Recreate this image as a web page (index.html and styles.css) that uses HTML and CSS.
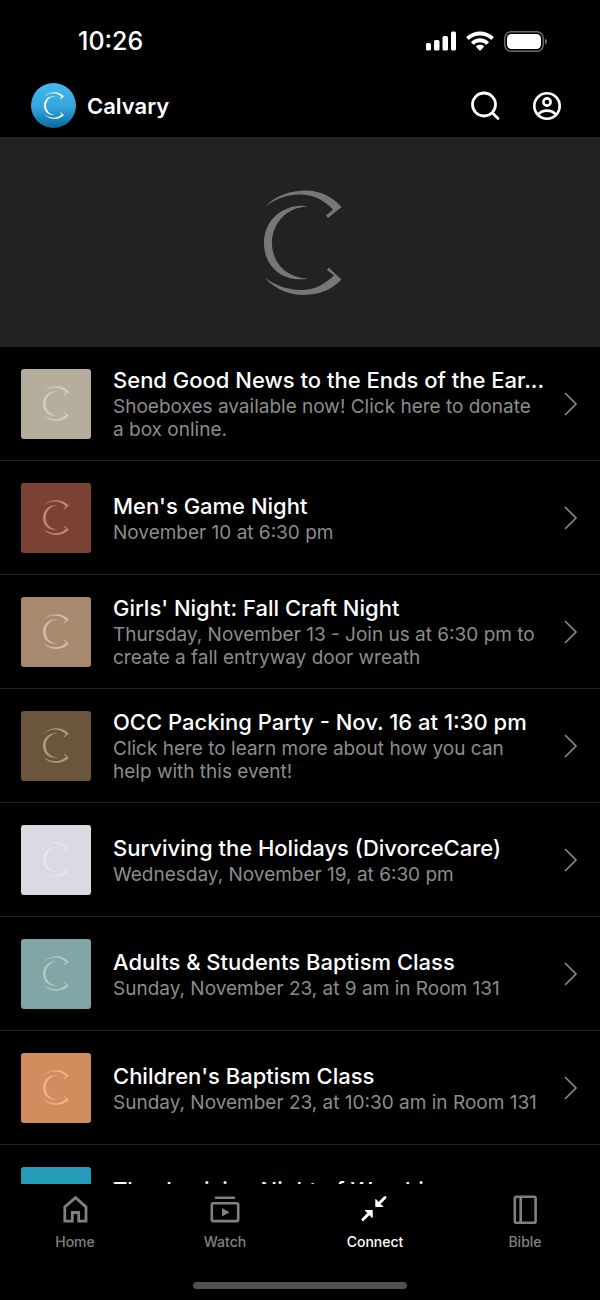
FILE: index.html
```html
<!DOCTYPE html>
<html lang="en">
<head>
    <meta charset="UTF-8">
    <meta name="viewport" content="width=device-width, initial-scale=1.0">
    <title>Calvary</title>
    <link rel="stylesheet" href="styles.css">
</head>
<body>
    <!-- Shared shapes -->
    <svg class="sprite" aria-hidden="true">
        <symbol id="logo" viewBox="24 18 78 105">
            <path d="M25 35C36 23 51 18.500 66 18.500C80 18.500 93 25 101.500 35L88 46L86 43.500L93 37.500C85 29 75 23 61 22.500C47 22 35 27 25 35Z"/>
            <path d="M68 34.500C64 33.500 61 33.500 58 34C38 36 24 51 24 71C24 92 39 107 59 107.300C62 107.400 65 107.200 68 106.500C47 106 32 91 32 71C32 51 47 35 68 34.500Z"/>
            <path d="M25 106C35 117 49 123 64 123C80 122.500 93 117 101.500 107.500L88.500 95.500L87 98L94 103.500C85 112 75 118 61 118C47 118 35 113 25 106Z"/>
        </symbol>
        <symbol id="chevron" viewBox="0 0 14 24">
            <path d="M1 1L12 12L1 23" fill="none" stroke="currentColor" stroke-width="1.600"/>
        </symbol>
    </svg>

    <div class="app">
        <div class="status-bar">
            <span class="time">10:26</span>
            <div class="status-icons">
                <svg width="30" height="20" viewBox="0 0 30 20" fill="#fff">
                    <rect x="0" y="12" width="5" height="7.500" rx="1.500"/>
                    <rect x="8" y="9" width="5.500" height="10.500" rx="1.500"/>
                    <rect x="16.500" y="5" width="5.500" height="14.500" rx="1.500"/>
                    <rect x="25" y="0.500" width="5" height="19" rx="1.500"/>
                </svg>
                <svg width="28" height="20" viewBox="0 0 28 20" fill="#fff">
                    <path d="M14 0.500C8.700 0.500 4 2.500 0.600 5.800Q0.200 6.300 0.600 6.800L2.300 8.500Q2.800 8.900 3.300 8.500C6.200 5.900 9.900 4.500 14 4.500C18.100 4.500 21.800 5.900 24.700 8.500Q25.200 8.900 25.700 8.500L27.400 6.800Q27.800 6.300 27.400 5.800C24 2.500 19.300 0.500 14 0.500Z"/>
                    <path d="M14 7.300C10.600 7.300 7.600 8.600 5.400 10.700Q5 11.200 5.400 11.700L7.200 13.400Q7.700 13.800 8.200 13.400C9.700 12 11.700 11.200 14 11.200C16.300 11.200 18.300 12 19.800 13.400Q20.300 13.800 20.800 13.400L22.600 11.700Q23 11.200 22.600 10.700C20.400 8.600 17.400 7.300 14 7.300Z"/>
                    <path d="M14 13.800C12.500 13.800 11.200 14.300 10.200 15.200Q9.800 15.600 10.200 16.100L13.500 19.400Q14 19.800 14.500 19.400L17.800 16.100Q18.200 15.600 17.800 15.200C16.800 14.300 15.500 13.800 14 13.800Z"/>
                </svg>
                <svg width="44" height="21" viewBox="0 0 44 21">
                    <rect x="0.700" y="0.700" width="38.600" height="19.600" rx="6.500" fill="none" stroke="#6c6c6c" stroke-width="1.400"/>
                    <rect x="3" y="3" width="34" height="15" rx="4.500" fill="#fff"/>
                    <path d="M41 7.500Q43 8.500 43 10.500Q43 12.500 41 13.500Z" fill="#777"/>
                </svg>
            </div>
        </div>

        <header class="header">
            <a href="#" class="brand">
                <span class="avatar"><svg class="avatar-logo"><use href="#logo"/></svg></span>
                <span class="brand-name">Calvary</span>
            </a>
            <div class="header-actions">
                <button type="button" class="icon-button" aria-label="Search">
                    <svg width="30" height="30" viewBox="0 0 30 30" fill="none" stroke="#fff" stroke-width="2.800" stroke-linecap="round">
                        <circle cx="14" cy="13.500" r="11.500"/>
                        <path d="M22.500 22L28 27.500"/>
                    </svg>
                </button>
                <button type="button" class="icon-button" aria-label="Account">
                    <svg width="30" height="30" viewBox="0 0 30 30" fill="none" stroke="#fff" stroke-width="2.600">
                        <circle cx="15" cy="15" r="12.700"/>
                        <circle cx="15" cy="11" r="3.600"/>
                        <path d="M6 23.500C8.500 20.800 11.500 19.600 15 19.600C18.500 19.600 21.500 20.800 24 23.500"/>
                    </svg>
                </button>
            </div>
        </header>

        <main class="content">
            <div class="hero">
                <svg class="hero-logo"><use href="#logo"/></svg>
            </div>

            <a href="#" class="row">
                <span class="thumb thumb-sand"><svg class="thumb-logo"><use href="#logo"/></svg></span>
                <span class="row-text">
                    <span class="row-title">Send Good News to the Ends of the Ear...</span>
                    <span class="row-subtitle">Shoeboxes available now! Click here to donate a box online.</span>
                </span>
                <svg class="chevron"><use href="#chevron"/></svg>
            </a>
            <a href="#" class="row">
                <span class="thumb thumb-brick"><svg class="thumb-logo"><use href="#logo"/></svg></span>
                <span class="row-text">
                    <span class="row-title">Men's Game Night</span>
                    <span class="row-subtitle">November 10 at 6:30 pm</span>
                </span>
                <svg class="chevron"><use href="#chevron"/></svg>
            </a>
            <a href="#" class="row">
                <span class="thumb thumb-tan"><svg class="thumb-logo"><use href="#logo"/></svg></span>
                <span class="row-text">
                    <span class="row-title">Girls' Night: Fall Craft Night</span>
                    <span class="row-subtitle">Thursday, November 13 - Join us at 6:30 pm to create a fall entryway door wreath</span>
                </span>
                <svg class="chevron"><use href="#chevron"/></svg>
            </a>
            <a href="#" class="row">
                <span class="thumb thumb-brown"><svg class="thumb-logo"><use href="#logo"/></svg></span>
                <span class="row-text">
                    <span class="row-title">OCC Packing Party - Nov. 16 at 1:30 pm</span>
                    <span class="row-subtitle">Click here to learn more about how you can help with this event!</span>
                </span>
                <svg class="chevron"><use href="#chevron"/></svg>
            </a>
            <a href="#" class="row">
                <span class="thumb thumb-lilac"><svg class="thumb-logo"><use href="#logo"/></svg></span>
                <span class="row-text">
                    <span class="row-title">Surviving the Holidays (DivorceCare)</span>
                    <span class="row-subtitle">Wednesday, November 19, at 6:30 pm</span>
                </span>
                <svg class="chevron"><use href="#chevron"/></svg>
            </a>
            <a href="#" class="row">
                <span class="thumb thumb-teal"><svg class="thumb-logo"><use href="#logo"/></svg></span>
                <span class="row-text">
                    <span class="row-title">Adults &amp; Students Baptism Class</span>
                    <span class="row-subtitle">Sunday, November 23, at 9 am in Room 131</span>
                </span>
                <svg class="chevron"><use href="#chevron"/></svg>
            </a>
            <a href="#" class="row">
                <span class="thumb thumb-orange"><svg class="thumb-logo"><use href="#logo"/></svg></span>
                <span class="row-text">
                    <span class="row-title">Children's Baptism Class</span>
                    <span class="row-subtitle">Sunday, November 23, at 10:30 am in Room 131</span>
                </span>
                <svg class="chevron"><use href="#chevron"/></svg>
            </a>
            <a href="#" class="row">
                <span class="thumb thumb-blue"></span>
                <span class="row-text">
                    <span class="row-title">Thanksgiving Night of Worship</span>
                    <span class="row-subtitle">&nbsp;</span>
                </span>
            </a>
        </main>

        <nav class="tab-bar">
            <a href="#" class="tab">
                <svg width="30" height="30" viewBox="0 0 30 30" fill="none" stroke="currentColor" stroke-width="2.800">
                    <path d="M4.800 26.200V12L15.500 2.700L26 12V26.200H18.700V17.500H12.300V26.200Z"/>
                </svg>
                <span>Home</span>
            </a>
            <a href="#" class="tab">
                <svg width="30" height="30" viewBox="0 0 30 30" fill="none" stroke="currentColor" stroke-width="2.600">
                    <path d="M6 2.700H24" stroke-linecap="round"/>
                    <rect x="1.800" y="8.300" width="26.400" height="17.800" rx="1.500"/>
                    <path d="M12 13L19.500 17.200L12 21.500Z" fill="currentColor" stroke="none"/>
                </svg>
                <span>Watch</span>
            </a>
            <a href="#" class="tab tab-active">
                <svg width="30" height="30" viewBox="0 0 30 30" fill="none" stroke="currentColor" stroke-linecap="round" stroke-linejoin="round">
                    <path d="M3 24.500L9.500 18" stroke-width="3"/>
                    <path d="M5.500 15.500H12.200V22.200Z" fill="currentColor" stroke-width="1"/>
                    <path d="M25 2.500L18.500 9" stroke-width="3"/>
                    <path d="M15.800 4.800V11.500H22.500Z" fill="currentColor" stroke-width="1"/>
                </svg>
                <span>Connect</span>
            </a>
            <a href="#" class="tab">
                <svg width="30" height="30" viewBox="0 0 30 30" fill="none" stroke="currentColor" stroke-width="2.600">
                    <rect x="4.800" y="1.800" width="20.800" height="26" rx="1.500"/>
                    <path d="M10.700 1.800V27.800"/>
                </svg>
                <span>Bible</span>
            </a>
        </nav>
        <div class="home-indicator"></div>
    </div>
</body>
</html>
```
FILE: styles.css
```css
body {
    font-family: Inter, "Liberation Sans", sans-serif;
    margin: 0;
    background-color: #000;
    color: #fff;
}
a {
    color: inherit;
    text-decoration: none;
}
svg {
    display: block;
    flex-shrink: 0;
}
.sprite {
    display: none;
}
.app {
    display: flex;
    flex-direction: column;
    height: 100vh;
}

/* Status bar */
.status-bar {
    display: flex;
    justify-content: space-between;
    align-items: center;
    height: 32px;
    padding: 25px 52px 17px 78px;
}
.time {
    font-size: 25px;
    font-weight: 500;
}
.status-icons {
    display: flex;
    align-items: center;
    gap: 10px;
}

/* Header */
.header {
    display: flex;
    justify-content: space-between;
    align-items: center;
    height: 63px;
    padding: 0 38px 0 31px;
}
.brand {
    display: flex;
    align-items: center;
    gap: 11px;
}
.avatar {
    display: flex;
    align-items: center;
    justify-content: center;
    width: 45px;
    height: 45px;
    border-radius: 50%;
    background: linear-gradient(#48b8f0, #34a4dc 55%, #08689c);
}
.avatar-logo {
    width: 20px;
    height: 27px;
    fill: #fff;
}
.brand-name {
    font-size: 22px;
    font-weight: 600;
}
.header-actions {
    display: flex;
    gap: 32px;
}
.icon-button {
    padding: 0;
    border: none;
    background: none;
    color: #fff;
    cursor: pointer;
}

/* Content */
.content {
    flex: 1;
    min-height: 0;
    overflow-y: auto;
    scrollbar-width: none;
}
.hero {
    display: flex;
    align-items: center;
    justify-content: center;
    height: 210px;
    padding-left: 6px;
    background-color: #222;
}
.hero-logo {
    width: 78px;
    height: 105px;
    fill: #777;
}
.row {
    display: flex;
    align-items: center;
    box-sizing: border-box;
    min-height: 114px;
    padding: 0 22px 0 21px;
    border-bottom: 1px solid #222;
}
.thumb {
    display: flex;
    align-items: center;
    justify-content: center;
    flex-shrink: 0;
    width: 70px;
    height: 70px;
    margin-right: 22px;
    border-radius: 3px;
}
.thumb-logo {
    width: 26px;
    height: 35px;
    fill: currentColor;
}
.thumb-sand {
    background-color: #b5ae9c;
    color: #d3cdbe;
}
.thumb-brick {
    background-color: #7b4135;
    color: #bb8a7d;
}
.thumb-tan {
    background-color: #a68a70;
    color: #d2bba4;
}
.thumb-brown {
    background-color: #6b553d;
    color: #ac9a82;
}
.thumb-lilac {
    background-color: #d9dae2;
    color: #e6e7ed;
}
.thumb-teal {
    background-color: #82a5a5;
    color: #adc9c4;
}
.thumb-orange {
    background-color: #d28d5f;
    color: #eab48d;
}
.thumb-blue {
    background-color: #269cbb;
}
.row-text {
    flex: 1;
    min-width: 0;
}
.row-title {
    display: block;
    overflow: hidden;
    font-size: 22px;
    font-weight: 500;
    line-height: 28px;
    white-space: nowrap;
    text-overflow: ellipsis;
}
.row-subtitle {
    display: block;
    margin-top: 1px;
    padding-right: 8px;
    color: #8c8c8c;
    font-size: 19px;
    line-height: 23px;
}
.chevron {
    width: 14px;
    height: 24px;
    margin-left: 14px;
    color: #8c8c8c;
}

/* Tab bar */
.tab-bar {
    display: flex;
    height: 82px;
    padding-top: 11px;
    box-sizing: border-box;
}
.tab {
    display: flex;
    flex: 1;
    flex-direction: column;
    align-items: center;
    gap: 8px;
    color: #808080;
    font-size: 14px;
    font-weight: 500;
    line-height: 18px;
}
.tab-active {
    color: #fff;
}
.home-indicator {
    width: 214px;
    height: 7px;
    margin: 16px auto 11px;
    border-radius: 4px;
    background-color: #505050;
}
```
